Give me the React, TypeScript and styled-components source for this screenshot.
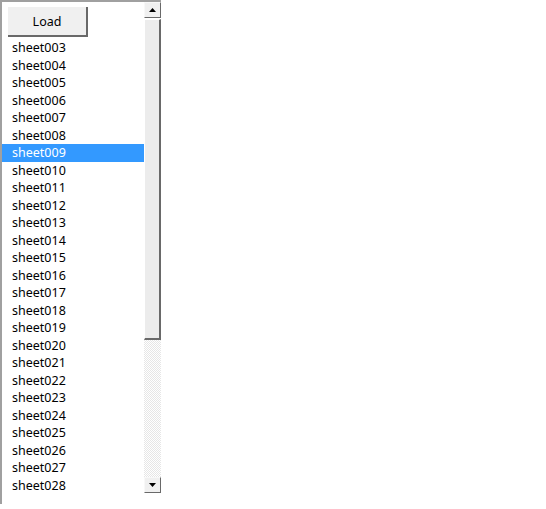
import React from 'react';
import styled, { createGlobalStyle } from 'styled-components';

const GlobalStyle = createGlobalStyle`
  html, body {
    margin: 0;
    padding: 0;
    background: #ffffff;
  }
  body {
    font-family: "Noto Sans", "Open Sans", sans-serif;
  }
`;

const Frame = styled.div`
  display: flex;
  width: 159px;
  height: 502px;
  border-left: 2px solid #a0a0a0;
  border-top: 2px solid #a0a0a0;
  background: #ffffff;
`;

const ListPane = styled.div`
  flex: 1;
  display: flex;
  flex-direction: column;
  overflow: hidden;
`;

const LoadButton = styled.button`
  width: 80px;
  height: 30px;
  margin: 5px 0 2px 6px;
  padding: 1px 0 0;
  box-sizing: border-box;
  background: #f0f0f0;
  border: none;
  border-right: 2px solid #696969;
  border-bottom: 2px solid #696969;
  font-family: "Noto Sans", sans-serif;
  font-size: 12.5px;
  color: #000000;
  cursor: pointer;
`;

const Row = styled.div<{ $selected?: boolean }>`
  height: 17.52px;
  line-height: 17.52px;
  padding-left: 10px;
  font-size: 12.5px;
  white-space: nowrap;
  color: ${p => (p.$selected ? '#ffffff' : '#000000')};
  background: ${p => (p.$selected ? '#3399ff' : 'transparent')};
`;

const ScrollBar = styled.div`
  width: 17px;
  height: 491px;
  display: flex;
  flex-direction: column;
`;

const ArrowButton = styled.div`
  height: 16px;
  box-sizing: border-box;
  display: flex;
  align-items: center;
  justify-content: center;
  background: #f0f0f0;
  border-top: 1px solid #f8f8f8;
  border-left: 1px solid #f8f8f8;
  border-right: 1px solid #696969;
  border-bottom: 1px solid #696969;
`;

const Thumb = styled.div`
  height: 321px;
  margin-top: 1px;
  box-sizing: border-box;
  background: #ececec;
  border-top: 1px solid #ffffff;
  border-left: 1px solid #ffffff;
  border-right: 2px solid #696969;
  border-bottom: 2px solid #696969;
`;

const Track = styled.div`
  flex: 1;
  background: repeating-conic-gradient(#ffffff 0 25%, #e6e6e6 0 50%) 0 0 / 2px 2px;
`;

const Arrow: React.FC<{ down?: boolean }> = ({ down }) => (
  <svg width="7" height="4" viewBox="0 0 7 4">
    <polygon points={down ? '0,0 7,0 3.5,4' : '3.5,0 7,4 0,4'} fill="#000000" />
  </svg>
);

const sheets = Array.from({ length: 26 }, (_, i) => `sheet${String(i + 3).padStart(3, '0')}`);

const App: React.FC = () => {
  return (
    <>
      <GlobalStyle />
      <Frame>
        <ListPane>
          <LoadButton>Load</LoadButton>
          {sheets.map(name => (
            <Row key={name} $selected={name === 'sheet009'}>
              {name}
            </Row>
          ))}
        </ListPane>
        <ScrollBar>
          <ArrowButton>
            <Arrow />
          </ArrowButton>
          <Thumb />
          <Track />
          <ArrowButton>
            <Arrow down />
          </ArrowButton>
        </ScrollBar>
      </Frame>
    </>
  );
};

export default App;
